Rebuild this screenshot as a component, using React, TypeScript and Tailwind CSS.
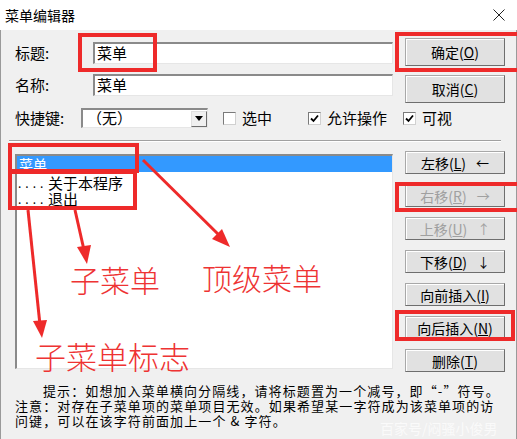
import React from 'react';

const font = { fontFamily: '"Noto Sans CJK SC", "Liberation Sans", sans-serif' };

const Btn: React.FC<{ label: string; keyChar: string; arrow?: string; disabled?: boolean; tall?: boolean }> = ({
  label,
  keyChar,
  arrow,
  disabled,
  tall,
}) => (
  <div
    className={`w-[100px] ${tall ? 'h-[28px]' : 'h-[23px]'} flex items-center justify-center gap-[10px] bg-[#e1e1e1] border border-[#a8a8a8] border-r-[#6e6e6e] border-b-[#6e6e6e] shadow-[inset_1px_1px_#ffffff] text-[14px] leading-none ${
      disabled ? 'text-[#a0a0a0]' : 'text-black'
    }`}
  >
    <span>
      {label}(<span className="underline">{keyChar}</span>)
    </span>
    {arrow && <span className="text-[13px]">{arrow}</span>}
  </div>
);

const Check: React.FC<{ checked?: boolean; label: string }> = ({ checked, label }) => (
  <div className="flex items-center gap-[6px] text-[15px] whitespace-nowrap shrink-0">
    <div className="w-[13px] h-[13px] shrink-0 bg-white border border-[#7a7a7a] border-r-[#d0d0d0] border-b-[#d0d0d0] flex items-center justify-center">
      {checked && (
        <svg width="9" height="9" viewBox="0 0 9 9">
          <path d="M1 4.5 L3.5 7 L8 1.5" stroke="#000" strokeWidth="1.8" fill="none" />
        </svg>
      )}
    </div>
    <span>{label}</span>
  </div>
);

const Field: React.FC<{ value: string }> = ({ value }) => (
  <div className="w-[300px] h-[22px] shrink-0 bg-white border-t-2 border-l-2 border-[#8a8a8a] border-b border-r border-b-[#e6e6e6] border-r-[#e6e6e6] flex items-center pl-[2px] text-[15px]">
    {value}
  </div>
);

const RedBox: React.FC<{ className: string }> = ({ className }) => (
  <div className={`absolute border-[4px] border-[#ee2a2a] ${className}`} />
);

export default function App() {
  return (
    <div className="relative w-[517px] h-[439px] overflow-hidden bg-[#f0f0f0] text-black" style={font}>
      {/* title bar */}
      <div className="h-[30px] bg-white flex items-center justify-between pl-[5px] pr-[12px]">
        <span className="text-[14px]">菜单编辑器</span>
        <svg width="12" height="12" viewBox="0 0 12 12">
          <path d="M0.5 0.5 L11.5 11.5 M11.5 0.5 L0.5 11.5" stroke="#222" strokeWidth="1" />
        </svg>
      </div>

      <div className="border-l border-r border-[#9a9a9a] h-[409px]">
        {/* top section */}
        <div className="flex pl-[14px] pt-[8px]">
          <div className="flex flex-col w-[378px] shrink-0">
            <div className="flex items-center h-[22px] mt-[4px]">
              <span className="w-[78px] shrink-0 text-[15px]">标题:</span>
              <Field value="菜单" />
            </div>
            <div className="flex items-center h-[22px] mt-[10px]">
              <span className="w-[78px] shrink-0 text-[15px]">名称:</span>
              <Field value="菜单" />
            </div>
            <div className="flex items-center h-[20px] mt-[12px] whitespace-nowrap">
              <span className="w-[66px] shrink-0 text-[15px]">快捷键:</span>
              <div className="w-[127px] h-[20px] shrink-0 bg-white border-t-2 border-l-2 border-[#8a8a8a] border-b border-r border-b-[#e6e6e6] border-r-[#e6e6e6] flex items-center">
                <span className="flex-1 pl-[4px] text-[15px]">（无）</span>
                <div className="w-[16px] h-[16px] bg-[#f0f0f0] border border-[#e0e0e0] border-r-[#6e6e6e] border-b-[#6e6e6e] flex items-center justify-center">
                  <svg width="8" height="5" viewBox="0 0 8 5">
                    <path d="M0 0 L8 0 L4 5 Z" fill="#000" />
                  </svg>
                </div>
              </div>
              <div className="ml-[15px] shrink-0">
                <Check label="选中" />
              </div>
              <div className="ml-[36px] shrink-0">
                <Check checked label="允许操作" />
              </div>
              <div className="ml-[16px] shrink-0">
                <Check checked label="可视" />
              </div>
            </div>
          </div>
          <div className="flex flex-col ml-[12px] gap-[9px]">
            <Btn label="确定" keyChar="O" tall />
            <Btn label="取消" keyChar="C" tall />
          </div>
        </div>

        {/* separator */}
        <div className="mx-[8px] mt-[12px] h-[2px] border-t border-[#a0a0a0] border-b border-b-white w-[492px]" />

        {/* list + side buttons */}
        <div className="flex pl-[14px] mt-[12px]">
          <div className="w-[378px] h-[215px] shrink-0 bg-white border-t-2 border-l-2 border-[#8a8a8a] border-b border-r border-b-[#e6e6e6] border-r-[#e6e6e6] text-[15px]">
            <div className="h-[16px] bg-[#3399ff] text-white pl-[2px] text-[14px] leading-[16px]">菜单</div>
            <div className="h-[17px] flex items-center mt-[2px] leading-[17px]">
              <span className="w-[31px] tracking-[4px] text-[12px] pl-[1px]">....</span>
              <span className="text-[15px]">关于本程序</span>
            </div>
            <div className="h-[16px] flex items-center leading-[16px]">
              <span className="w-[31px] tracking-[4px] text-[12px] pl-[1px]">....</span>
              <span className="text-[15px]">退出</span>
            </div>
          </div>
          <div className="flex flex-col ml-[12px] -mt-[3px] gap-[10px]">
            <Btn label="左移" keyChar="L" arrow="←" />
            <Btn label="右移" keyChar="R" arrow="→" disabled />
            <Btn label="上移" keyChar="U" arrow="↑" disabled />
            <Btn label="下移" keyChar="D" arrow="↓" />
            <Btn label="向前插入" keyChar="I" />
            <Btn label="向后插入" keyChar="N" />
            <Btn label="删除" keyChar="T" />
          </div>
        </div>

        {/* hint */}
        <div className="mt-[11px] pl-[14px] pr-[6px] text-[13px] leading-[15px] tracking-[1.1px] whitespace-nowrap">
          <div className="pl-[28px]">提示：如想加入菜单横向分隔线，请将标题置为一个减号，即“-”符号。</div>
          <div>注意：对存在子菜单项的菜单项目无效。如果希望某一字符成为该菜单项的访</div>
          <div>问键，可以在该字符前面加上一个 &amp; 字符。</div>
        </div>
      </div>

      {/* watermark */}
      <div className="absolute left-[380px] top-[418px] text-[14px] text-white/70">百家号/闷骚小俊男</div>

      {/* annotations */}
      <RedBox className="left-[78px] top-[33px] w-[79px] h-[39px]" />
      <RedBox className="left-[395px] top-[32px] w-[126px] h-[40px]" />
      <RedBox className="left-[8px] top-[143px] w-[131px] h-[30px]" />
      <RedBox className="left-[8px] top-[170px] w-[129px] h-[40px]" />
      <RedBox className="left-[395px] top-[182px] w-[126px] h-[30px]" />
      <RedBox className="left-[395px] top-[310px] w-[120px] h-[31px]" />

      <svg className="absolute left-0 top-0" width="517" height="439" viewBox="0 0 517 439">
        <g stroke="#ee2a2a" strokeWidth="3" fill="#ee2a2a">
          <line x1="143" y1="160" x2="222" y2="238" />
          <line x1="75" y1="210" x2="84" y2="250" />
          <line x1="28" y1="210" x2="40" y2="325" />
        </g>
        <g fill="#ee2a2a">
          <path d="M230 247 L212 239 L222 229 Z" />
          <path d="M87 264 L77 247 L91 245 Z" />
          <path d="M42 338 L33 321 L47 320 Z" />
        </g>
      </svg>
      <div className="absolute left-[70px] top-[264px] text-[30px] leading-none text-[#ee3333] font-light">子菜单</div>
      <div className="absolute left-[202px] top-[262px] text-[30px] leading-none text-[#ee3333] font-light">顶级菜单</div>
      <div className="absolute left-[35px] top-[340px] text-[31px] leading-none text-[#ee3333] font-light">子菜单标志</div>
    </div>
  );
}
